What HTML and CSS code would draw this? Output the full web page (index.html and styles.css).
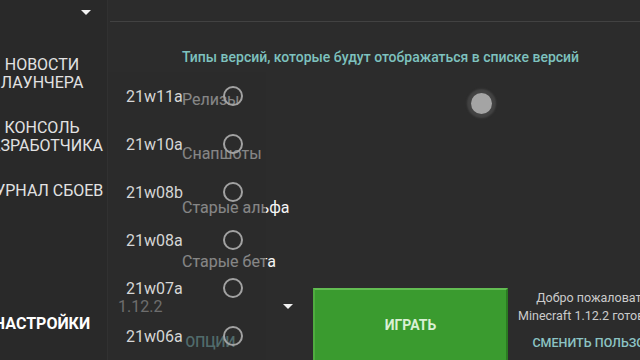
FILE: index.html
```html
<!DOCTYPE html>
<html lang="ru">
<head>
	<meta charset="UTF-8">
	<title>Лаунчер</title>
	<link rel="stylesheet" href="styles.css">
</head>
<body>
  <div class="launcher">
  	<aside class="sidebar">
  		<div class="profile"><span class="caret"></span></div>
  		<nav class="menu">
  			<div class="menu-item">НОВОСТИ<br>ЛАУНЧЕРА</div>
  			<div class="menu-item">КОНСОЛЬ<br>РАЗРАБОТЧИКА</div>
  			<div class="menu-item">ЖУРНАЛ СБОЕВ</div>
  			<div class="menu-item active">НАСТРОЙКИ</div>
  		</nav>
  	</aside>

  	<main class="content">
  		<div class="topbar"></div>
  		<section class="prefs">
  			<h2 class="prefs-title">Типы версий, которые будут отображаться в списке версий</h2>
  			<div class="pref-row"><span>Релизы</span><span class="thumb"></span></div>
  			<div class="pref-row"><span>Снапшоты</span></div>
  			<div class="pref-row"><span>Старые альфа</span></div>
  			<div class="pref-row"><span>Старые бета</span></div>
  		</section>
  		<footer class="bottombar">
  			<div class="version-col">
  				<div class="version-select"><span>1.12.2</span><span class="caret"></span></div>
  				<div class="options">ОПЦИИ</div>
  			</div>
  			<button class="play">ИГРАТЬ</button>
  			<div class="welcome">
  				<p>Добро пожаловать, Steve!</p>
  				<p>Minecraft 1.12.2 готов к запуску!</p>
  				<p class="switch-user">СМЕНИТЬ ПОЛЬЗОВАТЕЛЯ</p>
  			</div>
  		</footer>
  	</main>

  	<!-- выпадающий список версий поверх страницы -->
  	<div class="version-list">
  		<div class="version-row"><span>21w11a</span><i class="radio"></i></div>
  		<div class="version-row"><span>21w10a</span><i class="radio"></i></div>
  		<div class="version-row"><span>21w08b</span><i class="radio"></i></div>
  		<div class="version-row"><span>21w08a</span><i class="radio"></i></div>
  		<div class="version-row"><span>21w07a</span><i class="radio"></i></div>
  		<div class="version-row"><span>21w06a</span><i class="radio"></i></div>
  	</div>
  </div>
</body>
</html>
```

FILE: styles.css
```css
	  body {
	  	margin: 0;
	  	width: 640px;
	  	height: 360px;
	  	overflow: hidden;
	  	background-color: #2c2c2c;
	  	font-family: Roboto, 'Noto Sans', sans-serif;
	  	color: #e0e0e0;
	  }
	  .launcher {
	  	position: relative;
	  	display: flex;
	  	height: 360px;
	  }
	  .caret {
	  	width: 0;
	  	height: 0;
	  	border-left: 5px solid transparent;
	  	border-right: 5px solid transparent;
	  	border-top: 5px solid #f2f2f2;
	  }

	  /*左侧菜单*/
	  .sidebar {
	  	display: flex;
	  	flex-direction: column;
	  	flex: none;
	  	width: 107px;
	  	background-color: #292929;
	  	border-right: 1px solid #313131;
	  }
	  .profile {
	  	display: flex;
	  	justify-content: flex-end;
	  	align-items: center;
	  	height: 22px;
	  	padding: 2px 16px 0 0;
	  	box-sizing: border-box;
	  }
	  .menu {
	  	display: flex;
	  	flex-direction: column;
	  	flex: 1;
	  	gap: 27px;
	  	width: 170px;
	  	margin-left: -43px;
	  	padding: 34px 0 27px;
	  	font-size: 16px;
	  	line-height: 18px;
	  	text-align: center;
	  	white-space: nowrap;
	  }
	  .menu-item {
	  	color: #e2e2e2;
	  }
	  .menu-item.active {
	  	margin-top: auto;
	  	font-weight: bold;
	  	color: #fff;
	  }

	  /*设置区域*/
	  .content {
	  	display: flex;
	  	flex-direction: column;
	  	flex: 1;
	  	min-width: 0;
	  }
	  .topbar {
	  	height: 22px;
	  	border-bottom: 1px solid #424242;
	  	margin-left: 2px;
	  }
	  .prefs {
	  	padding: 27px 0 0 74px;
	  }
	  .prefs-title {
	  	margin: 0 0 7px;
	  	font-size: 14px;
	  	line-height: 16px;
	  	font-weight: 500;
	  	color: #7ec2bf;
	  	white-space: nowrap;
	  }
	  .pref-row {
	  	display: flex;
	  	justify-content: space-between;
	  	align-items: center;
	  	width: 310px;
	  	height: 54px;
	  	font-size: 16px;
	  	color: #f4f4f4;
	  }
	  .thumb {
	  	width: 21px;
	  	height: 21px;
	  	margin-top: 8px;
	  	border-radius: 50%;
	  	background-color: #a4a4a4;
	  	box-shadow: 0 0 2px 4px rgba(95, 95, 95, .45);
	  }

	  /*底部*/
	  .bottombar {
	  	display: flex;
	  	margin-top: auto;
	  	height: 72px;
	  }
	  .version-col {
	  	flex: none;
	  	width: 205px;
	  }
	  .version-select {
	  	display: flex;
	  	justify-content: space-between;
	  	align-items: center;
	  	height: 36px;
	  	padding: 0 20px 0 10px;
	  	font-size: 16px;
	  	color: #bdbdbd;
	  }
	  .options {
	  	height: 36px;
	  	line-height: 36px;
	  	text-align: center;
	  	font-size: 14px;
	  	font-weight: 500;
	  	color: #7fb8b8;
	  }
	  .play {
	  	flex: none;
	  	width: 195px;
	  	height: 74px;
	  	padding: 0;
	  	background-color: #3a9b2f;
	  	border-top: 2px solid #62bd52;
	  	border-left: 2px solid #4fad40;
	  	border-right: 2px solid #2b7a22;
	  	border-bottom: 2px solid #2b7a22;
	  	font-family: inherit;
	  	font-size: 14px;
	  	font-weight: bold;
	  	color: #d9f0d4;
	  }
	  .welcome {
	  	flex: none;
	  	width: 208px;
	  	padding-top: 1px;
	  	font-size: 12.5px;
	  	line-height: 18px;
	  	text-align: center;
	  	white-space: nowrap;
	  	color: #cbcbcb;
	  }
	  .welcome p {
	  	margin: 0;
	  }
	  .welcome .switch-user {
	  	margin-top: 9px;
	  	font-weight: 500;
	  	color: #8cc4c4;
	  }

	  /*版本列表*/
	  .version-list {
	  	position: absolute;
	  	top: 72px;
	  	left: 108px;
	  	bottom: 0;
	  	width: 158px;
	  	background-color: rgba(44, 44, 44, .55);
	  }
	  .version-row {
	  	display: flex;
	  	justify-content: space-between;
	  	align-items: center;
	  	height: 48px;
	  	padding: 0 23px 0 18px;
	  	font-size: 16px;
	  	color: #d6d6d6;
	  }
	  .radio {
	  	width: 20px;
	  	height: 20px;
	  	box-sizing: border-box;
	  	border: 2px solid #a2a2a2;
	  	border-radius: 50%;
	  }
```
